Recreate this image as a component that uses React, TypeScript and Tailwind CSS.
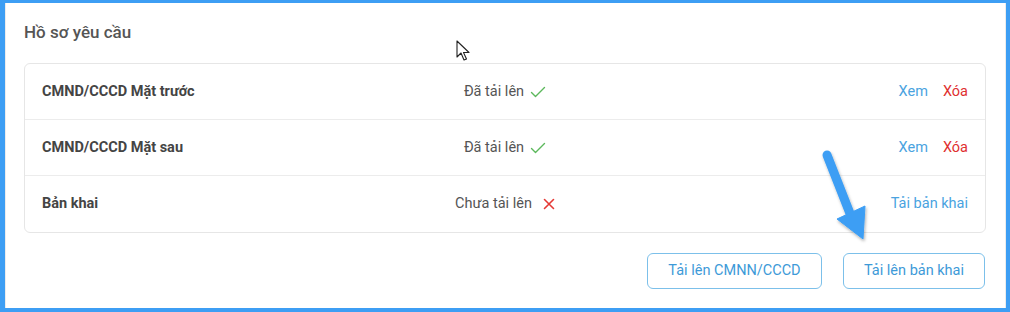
import React from "react";

const font = { fontFamily: "Roboto, 'Noto Sans', sans-serif" };

function Check() {
  return (
    <svg width="16" height="12" viewBox="0 0 16 12" fill="none">
      <path d="M1.5 6.5 L5.5 10.5 L14.5 1.5" stroke="#5cb85c" strokeWidth="1.4" strokeLinecap="round" strokeLinejoin="round" />
    </svg>
  );
}

function Cross() {
  return (
    <svg width="12" height="12" viewBox="0 0 12 12" fill="none">
      <path d="M1.5 1.5 L10.5 10.5 M10.5 1.5 L1.5 10.5" stroke="#e53935" strokeWidth="1.6" strokeLinecap="round" />
    </svg>
  );
}

function Row({ label, done, actions, last }: { label: string; done: boolean; actions: React.ReactNode; last?: boolean }) {
  return (
    <div className={`grid grid-cols-[1fr_auto_1fr] items-center h-[56px] px-[17px] ${last ? "" : "border-b border-[#ececec]"}`}>
      <div className="text-[14.5px] font-bold text-[#444]">{label}</div>
      <div className="flex items-center text-[14.5px] text-[#555]">
        {done ? (
          <>
            <span>Đã tải lên</span>
            <span className="ml-[6px]"><Check /></span>
          </>
        ) : (
          <>
            <span>Chưa tải lên</span>
            <span className="ml-[11px]"><Cross /></span>
          </>
        )}
      </div>
      <div className="flex justify-end items-center gap-[15px] text-[14.5px]">{actions}</div>
    </div>
  );
}

export default function App() {
  const xemXoa = (
    <>
      <span className="text-[#4aa3df]">Xem</span>
      <span className="text-[#e0302f]">Xóa</span>
    </>
  );
  return (
    <div className="w-[1010px] h-[312px] bg-[#3d9ef4] pt-[3px] pl-[5px] pr-[4px] pb-[4px]" style={font}>
      <div className="relative w-full h-full bg-white border-l border-r border-[#ececec] pl-[18px] pr-[19px] pt-[19px]">
        <div className="text-[17px] font-medium text-[#555] leading-[20px]">Hồ sơ yêu cầu</div>
        <div className="mt-[21px] border border-[#e6e6e6] rounded-[6px]">
          <Row label="CMND/CCCD Mặt trước" done actions={xemXoa} />
          <Row label="CMND/CCCD Mặt sau" done actions={xemXoa} />
          <Row label="Bản khai" done={false} last actions={<span className="text-[#4aa3df]">Tải bản khai</span>} />
        </div>
        <div className="mt-[20px] flex justify-end gap-[21px] pr-[1px]">
          <button className="w-[175px] h-[36px] border border-[#7cc0ea] rounded-[6px] text-[14.5px] text-[#3d9ad8]">Tải lên CMNN/CCCD</button>
          <button className="w-[142px] h-[36px] border border-[#7cc0ea] rounded-[6px] text-[14.5px] text-[#3d9ad8]">Tải lên bản khai</button>
        </div>

        {/* annotation arrow */}
        <svg className="absolute left-[795px] top-[140px]" width="80" height="110" viewBox="795 140 80 110" style={{ overflow: "visible" }}>
          <defs>
            <filter id="sh" x="-50%" y="-50%" width="200%" height="200%">
              <feDropShadow dx="1" dy="2" stdDeviation="1.5" floodColor="#000" floodOpacity="0.3" />
            </filter>
          </defs>
          <g filter="url(#sh)" transform="translate(-5,-3)">
            <line x1="826" y1="155" x2="850" y2="216" stroke="#3d9ef4" strokeWidth="9" strokeLinecap="round" />
            <polygon points="836,219 864,206 862,239" fill="#3d9ef4" stroke="#3d9ef4" strokeWidth="1" strokeLinejoin="round" />
          </g>
        </svg>

        {/* mouse cursor */}
        <svg className="absolute left-[450px] top-[37px]" width="14" height="22" viewBox="0 0 14 22">
          <path d="M1 1 L1 17 L5 13 L8 20 L10.5 19 L7.5 12.5 L13 12.5 Z" fill="white" stroke="#222" strokeWidth="1.1" strokeLinejoin="round" />
        </svg>
      </div>
    </div>
  );
}
